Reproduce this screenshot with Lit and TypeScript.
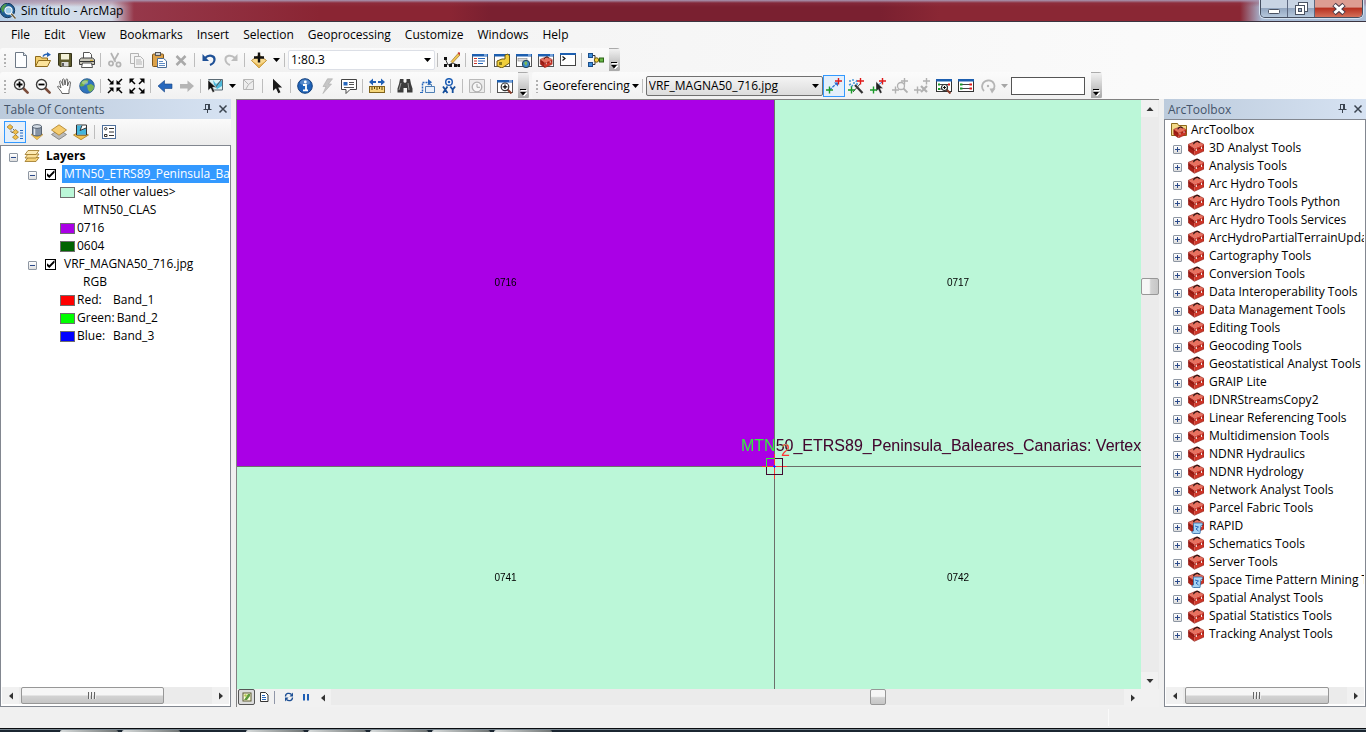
import { LitElement, html, svg, css, nothing } from "lit";
import { customElement, property } from "lit/decorators.js";
import { classMap } from "lit/directives/class-map.js";

const cross = (x: number, y: number, c: string) =>
  svg`<path d=${`M${x - 3} ${y}h7M${x + 0.5} ${y - 3.5}v7`} stroke=${c} stroke-width="1.4" fill="none"/>`;

const windowFrame = svg`<rect x=".5" y="2.5" width="15" height="12" fill="#fff" stroke="#555"/><path d="M0 2h16v2.5H0z" fill="#1d5fb0"/><path d="M12 3h3" stroke="#cfe4ff"/>`;
const lens = (c: string, ring: string) => svg`
  <path d="M10 10l4.6 4.6" stroke=${c} stroke-width="2.6" stroke-linecap="round"/>
  <circle cx="6.5" cy="6.5" r="5" fill="#fff" stroke=${ring} stroke-width="1.4"/>`;
const toolbox = svg`
  <path d="M.3 4.300L9 .8l7 3.700-9.700 3.700z" fill="#e8715f"/>
  <path d="M.3 4.300l6 3.900V15.300l-6-4.500z" fill="#a81f17"/>
  <path d="M6.300 8.200L16 4.500v6.500l-9.700 4.300z" fill="#cf3628"/>
  <path d="M.3 6.600l6 3.900L16 6.700" stroke="#7c150e" stroke-width=".8" fill="none"/>
  <path d="M.3 4.300L9 .8l7 3.700v6.500l-9.700 4.300-6-4.500z" stroke="#8b1d14" stroke-width=".6" fill="none"/>
  <path d="M5.500 4.300c.3-2.600 5.200-4.300 6-1.300" stroke="#2a1512" stroke-width="1.300" fill="none"/>
  <path d="M8.300 8.700v2.200M13.500 6.700v2.200" stroke="#f6ebe6" stroke-width="1.100"/>`;
const layerStack = svg`
  <path d="M4 9.500h11l-3 4H1z" fill="#f6d27a" stroke="#9b7422" stroke-width=".8"/>
  <path d="M4 6h11l-3 4H1z" fill="#fbe09a" stroke="#9b7422" stroke-width=".8"/>
  <path d="M4 2.500h11l-3 4H1z" fill="#fdeab4" stroke="#9b7422" stroke-width=".8"/>`;
const globe = svg`
  <circle cx="8" cy="8" r="7.300" fill="#2f74bd" stroke="#20508a" stroke-width=".8"/>
  <path d="M3 3.500c2-2 5-2.200 6.500-1.500l-1 2.500-2.500 1-1 2.500-3 .500-1-.5c0-2 1-3.500 2-4.500z" fill="#6fae4a"/>
  <path d="M8 7.500l4-1.500 3 2c0 3-2 5.500-4 6l-2-2z" fill="#7db552"/>
  <ellipse cx="6" cy="4.500" rx="3" ry="2" fill="#fff" opacity=".35"/>`;

const ICONS: Record<string, unknown> = {
  app: svg`
    <circle cx="7.500" cy="7.500" r="7.200" fill="#1f5d95" stroke="#17375a"/>
    <path d="M1 6c1-4 4-5 6-5L4.500 5 3 10z" fill="#4f9a4a"/>
    <path d="M10.500 10l5 5.500" stroke="#e8eef4" stroke-width="2.800"/>
    <path d="M11 10.500l4.500 5" stroke="#6b5a36" stroke-width="1.400"/>
    <circle cx="8.500" cy="7.500" r="3.600" fill="#9ccbea" stroke="#f2f7fc" stroke-width="1.200"/>`,
  new: svg`<path d="M2.500 .5h8l3 3v12h-11z" fill="#fdfeff" stroke="#6d7885"/><path d="M10.500.5v3h3" fill="#dbe4ee" stroke="#6d7885"/>`,
  open: svg`
    <path d="M.5 14.500V4.500h5l1 1.500h6v3" fill="#f3cf6f" stroke="#8d6a1c"/>
    <path d="M.5 14.500l3-6h12l-3 6z" fill="#fbe39b" stroke="#8d6a1c"/>
    <path d="M8 4.500c1-2.500 3-2.500 5-2" stroke="#2563b5" stroke-width="1.500" fill="none"/><path d="M12 0l4 2.800L12 5z" fill="#2563b5"/>`,
  save: svg`
    <path d="M1.500 1.500h13v13h-11.500l-1.500-1.500z" fill="#5d5a2c" stroke="#35331a"/>
    <rect x="4" y="2" width="8" height="5.500" fill="#f3f1d8"/><rect x="4.500" y="10" width="7" height="4.500" fill="#dcdcdc"/><path d="M6 11v3" stroke="#333" stroke-width="1.500"/>`,
  print: svg`
    <path d="M4.500 7V.5h6l2 2V7" fill="#fff" stroke="#555"/>
    <path d="M.5 7.500l2-1.500h11l2 1.500v5H.5z" fill="#c9c7bb" stroke="#3f3f3f"/>
    <path d="M1 9.500h14" stroke="#333"/><path d="M3.500 11h9l1 4.500h-11z" fill="#fff" stroke="#555"/><path d="M11 8.300h3" stroke="#d8b02c"/>`,
  cut: svg`<g fill="none" stroke="#b3b3b3" stroke-width="1.700"><path d="M4 1l4.500 9M11.500 1L7 9"/><circle cx="4" cy="11.500" r="2.100"/><circle cx="11.500" cy="12.500" r="2.100"/></g>`,
  copy: svg`<g fill="#f4f4f4" stroke="#b3b3b3"><path d="M1.500 1.500h8v10h-8z"/><path d="M5.500 4.500h6l3 3v8h-9z"/><path d="M7 8h5M7 10h6M7 12h6"/></g>`,
  paste: svg`
    <rect x="1.500" y="2" width="11" height="12.500" rx="1" fill="#dca24a" stroke="#7d551a"/>
    <rect x="4.500" y=".5" width="5" height="3" fill="#cfcfcf" stroke="#555"/>
    <path d="M6.500 6.500h6l3 2.500v6.500h-9z" fill="#fff" stroke="#4c6c96"/><path d="M8 9.500h4M8 11.500h6M8 13.500h6" stroke="#5f8cc4"/>`,
  delete: svg`<path d="M3.500 4l9 9M12.500 4l-9 9" stroke="#a9a9a9" stroke-width="2.500"/>`,
  undo: svg`<path d="M4 6c4-4 10-2.500 9.500 2-.3 2.500-2 4-4.500 5" fill="none" stroke="#1f5197" stroke-width="2.200"/><path d="M1.500 2v7h6.500z" fill="#1f5197"/>`,
  redo: svg`<path d="M12 6c-4-4-10-2.500-9.500 2 .3 2.500 2 4 4.500 5" fill="none" stroke="#bdbdbd" stroke-width="2"/><path d="M14.500 2v7H8z" fill="#bdbdbd"/>`,
  add: svg`<path d="M.5 8.500L8 3l7.500 5.500L8 16z" fill="#f9d98c" stroke="#b48a3a"/><path d="M.5 8.500L8 13l7.500-4.500L8 16z" fill="#e3b454"/><path d="M8 .5v10M3 5.500h10" stroke="#111" stroke-width="2.400"/>`,
  editor: svg`
    <path d="M1 6l3 7 5-2 6 3" fill="none" stroke="#333"/><g fill="#111"><path d="M0 5h3v3H0zM0 12h3v3H0zM5 12h3v3H5zM10 12h3v3h-3zM13.500 12h2.500v3h-2.500z"/></g>
    <path d="M7 9.500L14 1.500l2 1.500-7.500 8z" fill="#f1c552" stroke="#8d6a1c" stroke-width=".6"/><path d="M13.500 1l1.500-1 1.500 1.500L15.500 3z" fill="#c9352a"/>`,
  tocwin: svg`${windowFrame}<path d="M2 6.500h3M2 9h3M2 11.500h3" stroke="#c9352a"/><path d="M6 6.500h7M6 9h7M6 11.500h5" stroke="#2563b5"/>`,
  catalog: svg`${windowFrame}<path d="M3 9l5-2h3V3l3-1 1.500 2v7L8 16l-5-2z" fill="#f0cf3c" stroke="#6e5a0e"/><path d="M5 10h3v3H5z" fill="#8a7a1a"/>`,
  search: svg`${windowFrame}<rect x="2" y="6.500" width="9" height="2.500" fill="#ddd" stroke="#888" stroke-width=".6"/><circle cx="10" cy="12" r="3.700" fill="#3b86c9" stroke="#245"/><path d="M8 11l2-2 1.500 2-1.500 3z" fill="#7dbb55"/>`,
  toolboxwin: svg`${windowFrame}<g transform="translate(2 4) scale(.76)">${toolbox}</g>`,
  python: svg`<rect x=".5" y="1.500" width="15" height="12" fill="#fff" stroke="#444"/><path d="M0 1h16v2H0z" fill="#1d5fb0"/><path d="M2.500 4.500l2.500 2-2.500 2" fill="none" stroke="#111" stroke-width="1.200"/>`,
  model: svg`
    <path d="M4 3.500h3v9H4M7 8h3" fill="none" stroke="#333"/>
    <rect x=".5" y="1.500" width="4" height="4" fill="#3f8fdb" stroke="#1c4d88"/><rect x=".5" y="10.500" width="4" height="4" fill="#3f8fdb" stroke="#1c4d88"/>
    <circle cx="8.500" cy="8" r="2.200" fill="#f0cf3c" stroke="#6e5a0e"/><rect x="11.500" y="6" width="4" height="4" fill="#66b545" stroke="#2d6417"/>`,
  zoomin: svg`${lens("#7a4b3a", "#3c3c3c")}<path d="M6.500 3.500v6M3.500 6.500h6" stroke="#000" stroke-width="1.800"/>`,
  zoomout: svg`${lens("#7a4b3a", "#3c3c3c")}<path d="M3.500 6.500h6" stroke="#000" stroke-width="1.800"/>`,
  pan: svg`<path d="M5 15.500c0-2-4-5-4.500-7 1-1 2.500.5 3.500 1.500L2.500 3.500c.8-1 1.500-.5 2 .5L6 7.500 5.500 1.500c.8-1 1.600-.7 1.800.3L8 7l1-5.500c.8-.8 1.700-.5 1.700.5L10.500 8 12 4c.8-.8 1.700-.3 1.500.7-.5 3-.5 5.300-1.500 7.300v3.500z" fill="#fff" stroke="#555" stroke-width=".9"/>`,
  globe,
  fixedin: svg`<g stroke="#000" stroke-width="1.500"><path d="M1 1l4 4M15 1l-4 4M1 15l4-4M15 15l-4-4"/></g><path d="M6.500 2v4.500H2zM9.500 2v4.500H14zM6.500 14V9.500H2zM9.500 14V9.500H14z"/>`,
  fixedout: svg`<g stroke="#000" stroke-width="1.500"><path d="M2 2l4 4M14 2l-4 4M2 14l4-4M14 14l-4-4"/></g><path d="M.5 5.500v-5h5zM15.500 5.500v-5h-5zM.5 10.500v5h5zM15.500 10.500v5h-5z"/>`,
  back: svg`<path d="M1 8l6.500-5.500V6H15v4.500H7.500V14z" fill="#2768bd" stroke="#164383" stroke-width=".6"/>`,
  forward: svg`<path d="M15 8L8.500 2.500V6H1v4.500h7.500V14z" fill="#b5b5b5"/>`,
  select: svg`<path d="M1.500 1.500h14v10.500h-9z" fill="#d9f2f5" stroke="#5b6a74"/><path d="M6 2l3 4 6-4v6l-5 3-3-4z" fill="#4db8da"/><path d="M8 10l6-8" stroke="#555"/><path d="M1 2v10.500l2.700-2.300 2 4.300 2-1-2-4.200h3.300z" fill="#111" stroke="#fff" stroke-width=".5"/>`,
  clear: svg`<path d="M2.500 1.500h10v10h-10z" fill="#ededed" stroke="#b5b5b5"/><path d="M3 2l4.500 4.500L12 3M7.500 6.500L5 11" stroke="#b5b5b5" fill="none"/>`,
  pointer: svg`<path d="M4 .8v12l3-2.500 2.300 5 2.200-1.100-2.300-4.700h3.900z" fill="#1a1a1a"/>`,
  identify: svg`<circle cx="8" cy="8" r="7.300" fill="#1e63b8" stroke="#123f7c"/><ellipse cx="8" cy="4.500" rx="5" ry="3" fill="#fff" opacity=".25"/><circle cx="8.300" cy="4" r="1.400" fill="#fff"/><path d="M6 7h3v5M6 12.300h5" stroke="#fff" stroke-width="1.800" fill="none"/>`,
  hyperlink: svg`<path d="M8.500 .8h5L9.500 6h3L4 15.500 7 8.500H4z" fill="#c6c6c6" stroke="#ababab" stroke-width=".6"/>`,
  popup: svg`<path d="M.5 1.500h15v10H9l-4 4v-4H.5z" fill="#fff" stroke="#444"/><rect x="2.500" y="4" width="4" height="3.500" fill="#2768bd"/><path d="M8 4.500h5M8 6.500h5M3 9.500h10" stroke="#555"/>`,
  measure: svg`<path d="M0 4l4-3.500v2.500h3v2H4v2.500zM16 4l-4-3.500v2.500H9v2h3v2.500z" fill="#1f5fb5"/><rect x=".5" y="8.500" width="15" height="6" fill="#f5d67a" stroke="#80621c"/><path d="M3 9v3M5.500 9v2M8 9v3M10.500 9v2M13 9v3" stroke="#5d450d"/>`,
  find: svg`<path d="M3 1h3.500v3L8 5l1.500-1V1H13l1 5 1.500 4.500v4h-5.500V10H6.500v4.500H.5v-4L2 6z" fill="#3d3d3d"/><path d="M4 5l-2 7M11 5l1 7" stroke="#9a9a9a"/>`,
  route: svg`<path d="M3.500 13.500v-9h6" fill="none" stroke="#2768bd" stroke-width="1.500" stroke-dasharray="2 1"/><path d="M9 1l4 3.300L9 7.500z" fill="#2768bd"/><path d="M6.500 8.500h9v6h-9zM8.500 6.500h4v2" fill="#e8f1fa" stroke="#4f7fb4"/><path d="M1 14.500h3" stroke="#2768bd"/>`,
  xy: svg`<circle cx="8" cy="4" r="3.300" fill="#fff" stroke="#1f5fb5" stroke-width="1.500"/><circle cx="8" cy="4" r="1.300" fill="#1f5fb5"/><path d="M2 8.500l4.500 6.500M6.500 8.500L2 15M9.300 8.500l2.400 3 2.400-3M11.700 11.500V15" stroke="#164f9c" stroke-width="1.800" fill="none"/>`,
  time: svg`<path d="M.5 1.500h15v13H.5z" fill="#ececec" stroke="#b9b9b9"/><circle cx="8" cy="9" r="4.800" fill="#f7f7f7" stroke="#b0b0b0" stroke-width="1.300"/><path d="M8 6v3.300h3" stroke="#a5a5a5" fill="none"/>`,
  viewer: svg`${windowFrame}<path d="M10 11l4.500 4.500" stroke="#8a3b2a" stroke-width="2"/><circle cx="8" cy="8.800" r="3.800" fill="#fff" stroke="#333" stroke-width="1.200"/><path d="M8 6.500v4.600M5.700 8.800h4.600" stroke="#000" stroke-width="1.200"/>`,
  ctrl: svg`<path d="M3.500 12L11 5" stroke="#2a6fd0" stroke-width="1.200" stroke-dasharray="3 1"/><path d="M8 4.500h4v4z" fill="#2a6fd0"/>${cross(3, 12, "#1a9a2a")}${cross(12, 3, "#e01818")}`,
  wand: svg`<path d="M7 7l7.500 8" stroke="#333" stroke-width="2.200"/><path d="M1 3h2M5 1v2M9 2l-1 2M1 7l2-1M3 9l2-2M8 6h2M5 5h2" stroke="#4a97d8" stroke-width="1.400"/><path d="M5 14l7-8" stroke="#4b4b4b"/>${cross(3, 12, "#1a9a2a")}${cross(12, 3, "#e01818")}`,
  ctrlsel: svg`<path d="M6 9l6-5" stroke="#2a6fd0"/><path d="M6 3.500v10l2.300-2 1.800 4 2-1-1.900-3.900h3z" fill="#222" stroke="#fff" stroke-width=".4"/>${cross(3, 12, "#1a9a2a")}${cross(12, 3, "#e01818")}`,
  ctrlzoom: svg`<circle cx="9" cy="8" r="3.500" fill="#f4f4f4" stroke="#b0b0b0" stroke-width="1.300"/><path d="M11.500 10.500l4 4" stroke="#b0b0b0" stroke-width="1.800"/>${cross(3, 12, "#b0b0b0")}${cross(12, 3, "#b0b0b0")}`,
  ctrldel: svg`<path d="M7 8l6 6M13 8l-6 6" stroke="#b0b0b0" stroke-width="2.200"/>${cross(3, 12, "#b0b0b0")}${cross(12, 3, "#b0b0b0")}`,
  geoview: svg`<rect x=".5" y="1.500" width="15" height="12" fill="#fff" stroke="#333"/><path d="M0 1h16v2.500H0z" fill="#1d5fb0"/><path d="M2 6.500h11M2 11h4" stroke="#444"/><path d="M2 5.500h2v2H2zM2 10h2v2H2z" fill="#1a9a2a"/><path d="M12 5.500h2v2h-2z" fill="#e01818"/><path d="M10.500 11.500l4 4" stroke="#8a3b2a" stroke-width="2"/><circle cx="8.500" cy="9.500" r="3" fill="#fff" stroke="#333" stroke-width="1.200"/><path d="M7 9.500h3M8.500 8v3" stroke="#111"/>`,
  linktable: svg`<rect x=".5" y="1.500" width="15" height="12" fill="#fff" stroke="#333"/><path d="M0 1h16v2.500H0z" fill="#1d5fb0"/><path d="M3 6.500h9M3 10.500h9" stroke="#444"/><path d="M2 5.500h2.500v2H2zM2 9.500h2.500v2H2z" fill="#1a9a2a"/><path d="M11.500 5.500H14v2h-2.500zM11.500 9.500H14v2h-2.500z" fill="#e01818"/>`,
  rotate: svg`<path d="M4 13C.5 9.500 2 3 8 2.500s8 6 5 9" fill="none" stroke="#b5b5b5" stroke-width="1.800"/><path d="M9.500 10.500h6l-3.500 5z" fill="#b5b5b5"/><circle cx="8" cy="8" r="1.200" fill="#b5b5b5"/>`,
  toolbox,
  scripttoolbox: svg`${toolbox}<path d="M5.500 5h7.500c2.500 0 2 2.500 0 2.500L12 15.500H5.500c-2 0-2-2.500 0-2.500z" fill="#a6d4f5" stroke="#2d6ba6" stroke-width=".8"/><path d="M7 8l3.500 1-2.500 2 2.500 2" stroke="#2768bd" fill="none"/>`,
  rootbox: svg`<path d="M.5 13.500V1.500h6l1 2h8v10z" fill="#f3d987" stroke="#8d6a1c"/><g transform="translate(2.500 4) scale(.78)">${toolbox}</g>`,
  layers: layerStack,
  order: svg`<path d="M4 4v4.500h7M9 8.500v4M4 3l5 5" stroke="#555" fill="none" stroke-dasharray="1.500 1"/><path d="M0 3l3-2.500L6 3 3 5.500z" fill="#f2c14d" stroke="#9b7422" stroke-width=".7"/><path d="M5.500 8l3-2.500 3 2.500-3 2.500zM5.500 13.200l3-2.500 3 2.500-3 2.500z" fill="#f2c14d" stroke="#9b7422" stroke-width=".7"/><path d="M13 6.500h3M13 9h3M13 12h3M13 14.500h3" stroke="#2768bd" stroke-width="1.200"/>`,
  source: svg`<path d="M2 10.500l6-2 6 2-6 5.300z" fill="#f2c14d" stroke="#b48a3a" stroke-width=".6"/><path d="M3.500 2.500v8c1.500 2 7.500 2 9 0v-8z" fill="#8593a5" stroke="#3f4b5a" stroke-width=".8"/><path d="M5.500 3v8" stroke="#dfe6ee" stroke-width="1.500"/><ellipse cx="8" cy="2.500" rx="4.500" ry="1.900" fill="#d5dde6" stroke="#3f4b5a" stroke-width=".8"/>`,
  visibility: svg`<path d="M.5 10.500L8 5.500l7.500 5L8 15.500z" fill="#b9b9b9" stroke="#777" stroke-width=".8"/><path d="M.5 6L8 .8 15.500 6 8 11.200z" fill="#f6cd70" stroke="#a97c25" stroke-width=".8"/>`,
  selection: svg`<path d="M.5 11L8 7l7.500 4L8 15.700z" fill="#f2c14d" stroke="#a97c25" stroke-width=".8"/><path d="M3.500 1h10v10h-10z" fill="#fff" stroke="#333"/><path d="M4 1.500h5l-2 5 6-2.500v6.500H4z" fill="#43b5dc"/><path d="M9 1.500l-2 5 6-2.500" stroke="#333" fill="none"/>`,
  options: svg`<rect x="1.500" y="1.500" width="13" height="13" fill="#fff" stroke="#4f6f9a"/><path d="M8 4.500h5M8 8h5M8 11.500h5" stroke="#333"/><g fill="none" stroke="#333"><circle cx="4.700" cy="4.700" r="1.200"/><path d="M3.500 10.500h2.500v2H3.500z"/></g>`,
  dataview: svg`<rect x="4" y="4" width="8" height="8" fill="#fdfce0" stroke="#5a5a30"/><path d="M5 11l4-6h2v2l-3 4z" fill="#5d9a3d"/><circle cx="6.500" cy="6.500" r="1.300" fill="#b3c94c"/>`,
  layoutview: svg`<path d="M4.500 3.500h5l2.500 2.500v6.500h-7.500z" fill="#fff" stroke="#333"/><path d="M6 6.500h3M6 8.500h4M6 10.500h4" stroke="#2768bd"/>`,
  refresh: svg`<path d="M4.500 7.500c0-3.500 4-4 6-2M11.500 8.500c0 3.500-4 4-6 2" fill="none" stroke="#1d4f94" stroke-width="1.300"/><path d="M12 3.500v4H8.500zM4 12.500V8.500h3.500z" fill="#1d4f94"/>`,
  pause: svg`<path d="M5 5h2v6.500H5zM9 5h2v6.500H9z" fill="#1f5fb5"/>`,
  pin: svg`<path d="M6 3.500h5M6.500 3v5.500M10.500 3v5.500M9.500 3v5.500M4.500 8.500h8M8.500 8.500V12" stroke="#3b4450" fill="none"/>`,
  close: svg`<path d="M4.500 4.500l7 7M11.500 4.500l-7 7" stroke="#3b4450" stroke-width="1.500"/>`,
  left: svg`<path d="M10 4.500v7L6 8z" fill="#333"/>`,
  right: svg`<path d="M6 4.500v7L10 8z" fill="#333"/>`,
  up: svg`<path d="M4.500 10h7L8 6z" fill="#333"/>`,
  down: svg`<path d="M4.500 6h7L8 10z" fill="#333"/>`,
};

const icon = (name: string) => html`<svg class="ico" viewBox="0 0 16 16" aria-hidden="true">${ICONS[name]}</svg>`;

const base = css`
  :host { box-sizing: border-box; }
  *, *::before, *::after { box-sizing: border-box; }
  button, select, input { font: inherit; color: inherit; margin: 0; }
  button { border: 1px solid transparent; background: none; padding: 0; display: flex; align-items: center; justify-content: center; }
  .ico { width: 16px; height: 16px; display: block; flex: none; }
`;

@customElement("map-toolbar")
class MapToolbar extends LitElement {
  static styles = [base, css`
    :host { display: flex; align-items: center; align-self: stretch; background: linear-gradient(#fbfbfb, #f1f1f1); border-radius: 3px; }
    .grip { width: 10px; height: 14px; flex: none; background: radial-gradient(circle at 4px 2px, #b0b0b0 1px, transparent 1px) 1px 0 / 10px 4px; }
    .overflow { align-self: stretch; width: 11px; margin-left: 2px; border-radius: 0 3px 3px 0; background: linear-gradient(#f1f1f1, #a9a9a9); align-items: flex-end; }
    .overflow svg { width: 9px; height: 9px; margin-bottom: 1px; }
  `];
  render() {
    return html`<span class="grip"></span><slot></slot>
      <button class="overflow" aria-label="Toolbar options"><svg viewBox="0 0 9 9"><path d="M2 2.500h6M2 5h6L5 8z" stroke="#fff" fill="#fff"/><path d="M1 1.500h6" stroke="#000"/><path d="M1 4h6L4 7.500z"/></svg></button>`;
  }
}

@customElement("scroll-bar")
class ScrollBar extends LitElement {
  @property() axis = "x";
  @property({ type: Number }) start = 0;
  @property({ type: Number }) size = 10;
  @property({ type: Boolean }) ridged = false;
  static styles = [base, css`
    :host { display: block; }
    .bar { display: flex; height: 100%; background: #ebebeb; }
    .bar.y { flex-direction: column; }
    .arrow { width: 17px; height: 17px; flex: none; background: #f1f1f1; }
    .track { flex: 1; display: flex; min-width: 0; min-height: 0; }
    .y .track { flex-direction: column; }
    .thumb { flex: none; display: flex; align-items: center; justify-content: center; gap: 1px; border: 1px solid #979797; border-radius: 2px; background: linear-gradient(#f6f6f6 45%, #d2d2d2 55%, #c6c6c6); }
    .y .thumb { background: linear-gradient(90deg, #f6f6f6 45%, #d2d2d2 55%, #c6c6c6); }
    .ridge { width: 2px; height: 7px; background: #666; border-right: 1px solid #eee; }
  `];
  render() {
    const y = this.axis === "y";
    const dim = y ? "height" : "width";
    return html`<div class=${classMap({ bar: true, y })}>
      <button class="arrow" aria-label="Scroll back">${icon(y ? "up" : "left")}</button>
      <div class="track"><span style=${`${dim}:${this.start}%`}></span>
        <div class="thumb" style=${`${dim}:${this.size}%`}>${this.ridged ? [0, 1, 2].map(() => html`<i class="ridge"></i>`) : nothing}</div></div>
      <button class="arrow" aria-label="Scroll forward">${icon(y ? "down" : "right")}</button>
    </div>`;
  }
}

const MENUS = ["File", "Edit", "View", "Bookmarks", "Insert", "Selection", "Geoprocessing", "Customize", "Windows", "Help"];
const TOOLBOXES = ["3D Analyst Tools", "Analysis Tools", "Arc Hydro Tools", "Arc Hydro Tools Python", "Arc Hydro Tools Services", "ArcHydroPartialTerrainUpdate", "Cartography Tools", "Conversion Tools", "Data Interoperability Tools", "Data Management Tools", "Editing Tools", "Geocoding Tools", "Geostatistical Analyst Tools", "GRAIP Lite", "IDNRStreamsCopy2", "Linear Referencing Tools", "Multidimension Tools", "NDNR Hydraulics", "NDNR Hydrology", "Network Analyst Tools", "Parcel Fabric Tools", "RAPID", "Schematics Tools", "Server Tools", "Space Time Pattern Mining Tools", "Spatial Analyst Tools", "Spatial Statistics Tools", "Tracking Analyst Tools"];
const SCRIPTED = new Set(["RAPID", "Space Time Pattern Mining Tools"]);

@customElement("app-root")
class AppRoot extends LitElement {
  static styles = [base, css`
    :host { display: flex; flex-direction: column; height: 100vh; padding-right: 2px; background: #fff; color: #000; font: 12px/18px "Open Sans", "Noto Sans", sans-serif; overflow: hidden; }
    .titlebar { display: flex; align-items: center; height: 22px; flex: none; padding: 0 3px 0 0; border-bottom: 1px solid #3b3440;
      background: linear-gradient(#a897b2, rgba(150, 60, 80, .3) 3px, transparent 7px), linear-gradient(90deg, #b4cce6, #d3dfec 60px, #cfd6e4 112px, #96384a 134px, #8a2533 320px, #8a2533 450px, #7a2030 490px, #7a2030 880px, #8a2734 940px, #8a2734 1240px, #a9bcd6 1262px); }
    .title { flex: 1; margin-left: 5px; }
    .caption { align-self: flex-start; display: flex; height: 18px; border: 1px solid #454e60; border-top: 0; border-radius: 0 0 5px 5px; overflow: hidden; box-shadow: 0 0 0 1px #d5e2f0; }
    .caption button { width: 27px; border: 0; border-right: 1px solid #5c6880; background: linear-gradient(#c8d4e4 45%, #93a6c0 50%, #b5c7dc); }
    .caption .quit { width: 47px; border: 0; background: linear-gradient(#dd9d92 40%, #b83322 50%, #d4705a); }
    .chrome { flex: none; background: linear-gradient(90deg, #f0f0f0, #fcfcfc); }
    .menubar { display: flex; height: 26px; align-items: center; padding-left: 4px; }
    .menubar button { padding: 0 6px; }
    .row { display: flex; height: 24px; gap: 3px; }
    .row.second { height: 27px; }
    .tool { width: 22px; height: 22px; flex: none; }
    .tool.on { border-color: #3399ff; background: #e3effb; }
    .tool.drop { width: 12px; }
    .sep { width: 6px; height: 14px; flex: none; background: linear-gradient(#bdbdbd, #bdbdbd) 2px 0 / 1px 100% no-repeat; }
    .caret { width: 7px; height: 4px; display: block; }
    .combo { position: relative; display: block; height: 20px; }
    .combo select { appearance: none; display: block; width: 100%; height: 100%; padding: 0 20px 0 2px; border: 1px solid #dcdfe6; border-radius: 2px; background: #fff; }
    .combo .caret { position: absolute; right: 4px; top: 8px; pointer-events: none; }
    .scale { width: 147px; }
    .raster { width: 177px; }
    .raster select { border-color: #707070; background: linear-gradient(#f4f4f4, #dcdcdc); }
    .geo { gap: 2px; height: 22px; }
    .field { width: 74px; height: 18px; margin: 0 4px 0 0; border: 1px solid #555; background: #fff; padding: 0 2px; }
    .main { flex: 1; min-height: 0; display: grid; grid-template-columns: 231px minmax(0, 1fr) 202px; gap: 5px; background: #f0f0f0; }
    .panel { display: flex; flex-direction: column; min-width: 0; min-height: 0; }
    .head { display: flex; align-items: center; height: 20px; flex: none; padding: 1px 0 0 4px; background: linear-gradient(90deg, #bccbdc, #d6e2f2); color: #44546a; }
    .head h2 { flex: 1; margin: 0; font: inherit; }
    .head button { width: 16px; height: 18px; padding-bottom: 2px; }
    .tabs { display: flex; align-items: center; height: 26px; flex: none; padding-left: 4px; background: linear-gradient(#fafafa, #ececec); }
    .box { flex: 1; min-height: 0; display: flex; flex-direction: column; border: 1px solid #828790; background: #fff; padding: 1px 1px 2px; }
    .tree { flex: 1; margin: 0; padding: 0; list-style: none; overflow: hidden; white-space: nowrap; }
    .tree li { display: flex; align-items: center; height: 18px; }
    .exp { width: 9px; height: 9px; flex: none; border: 1px solid #8e97a3; border-radius: 1px; background: linear-gradient(#fff, #dedede); margin-top: 2px; }
    .exp svg { width: 7px; height: 7px; display: block; }
    .i0 { padding-left: 7px; gap: 6px; } .i1 { padding-left: 26px; }
    .i2 { padding-left: 58px; gap: 2px; } .i3 { padding-left: 81px; }
    .i1 .exp { margin-right: 8px; }
    .strong { font-weight: 700; }
    .tick { appearance: none; width: 11px; height: 11px; flex: none; border: 1px solid #000; background: #fff; margin: 0 6px 0 0; display: grid; place-items: center; }
    .tick:checked::before { content: ""; width: 8px; height: 8px; background: #000; clip-path: polygon(0 35%, 35% 65%, 100% 0, 100% 35%, 35% 100%, 0 70%); }
    .name { padding: 0 2px; }
    .picked { flex: 1; background: #3399ff; color: #fff; }
    .swatch { width: 15px; height: 11px; flex: none; border: 1px solid #6e6e6e; }
    .s-mint { background: #bbf7d8; } .s-purple { background: #aa00e6; } .s-forest { background: #006400; }
    .s-red { background: #f00; } .s-green { background: #0f0; } .s-blue { background: #00f; }
    .band { min-width: 34px; }
    .hbar { height: 17px; flex: none; }
    .toolboxes li { padding-left: 7px; gap: 5px; }
    .toolboxes .exp { margin-right: 1px; }
    .toolboxes .root { padding-left: 5px; gap: 4px; }
    .mapframe { display: grid; grid-template: minmax(0, 1fr) 18px / minmax(0, 1fr) 18px; border: solid #828282; border-width: 1px 0 0 1px; background: #f1f1f1; min-height: 0; }
    .map { display: grid; grid-template: 366fr 223fr / 537fr 367fr; background: #bbf7d8; overflow: hidden; font: 10px/12px "Liberation Sans", Arial, sans-serif; isolation: isolate; }
    .sheet { display: grid; place-items: center; position: relative; border: solid #6b6f6b; border-width: 0; min-width: 0; }
    .sheet.purple { background: #aa00e6; }
    .sheet.east { border-left-width: 1px; } .sheet.south { border-top-width: 1px; }
    .snap { position: absolute; left: -34px; top: -31px; font-size: 16px; line-height: 20px; white-space: nowrap; color: #78f0aa; mix-blend-mode: difference; }
    .linkno { position: absolute; left: 6px; top: -26px; font-size: 16px; line-height: 20px; color: #f33; }
    .marker { position: absolute; left: -14px; top: -14px; width: 28px; height: 28px; fill: none; shape-rendering: crispEdges; }
    .mapbar { display: flex; align-items: flex-start; background: #f1f1f1; padding-left: 1px; }
    .mapbar button { width: 17px; height: 16px; }
    .mapbar .on { border-color: #555; border-radius: 2px; background: #dcdcdc; }
    .mapbar .rule { width: 1px; height: 13px; background: #9096a8; margin: 2px 5px 0 2px; }
    .mapbar scroll-bar { flex: 1; height: 16px; }
    .status { height: 21px; flex: none; background: #f0f0f0; display: flex; justify-content: flex-end; }
    .status span { border-left: 1px solid #fafafa; margin: 2px 0; flex: none; width: 258px; }
    .taskbar { height: 4px; flex: none; display: flex; gap: 4px; padding-left: 60px; background: #1b2631; border-top: 1px solid #0a0d10; box-shadow: inset 0 1px #77858f; }
    .taskbar span { width: 58px; margin-top: 1px; background: linear-gradient(90deg, #d8dcdc, #6f7474); border-radius: 2px 2px 0 0; }
    .taskbar .later { margin-left: 62px; }
  `];

  private tool(name: string, label: string, on = false) {
    return html`<button class=${classMap({ tool: true, on })} aria-label=${label} title=${label}>${icon(name)}</button>`;
  }
  private caret(c = "#000") {
    return html`<svg class="caret" viewBox="0 0 7 4" aria-hidden="true"><path d="M0 0h7L3.500 4z" fill=${c}/></svg>`;
  }
  private drop(label: string, c = "#000") {
    return html`<button class="tool drop" aria-label=${label}>${this.caret(c)}</button>`;
  }
  private exp(open: boolean) {
    return html`<button class="exp" aria-label=${open ? "Collapse" : "Expand"}><svg viewBox="0 0 7 7"><path d=${open ? "M1 3.5h5" : "M1 3.5h5M3.5 1v5"} stroke="#2b4a8b" fill="none"/></svg></button>`;
  }
  private head(text: string) {
    return html`<div class="head"><h2>${text}</h2><button aria-label="Auto hide">${icon("pin")}</button><button aria-label="Close">${icon("close")}</button></div>`;
  }

  render() {
    const sep = html`<span class="sep"></span>`;
    return html`
      <header class="titlebar">${icon("app")}<span class="title">Sin título - ArcMap</span>
        <div class="caption">
          <button aria-label="Minimize"><svg class="ico" viewBox="0 0 16 16"><rect x="2.500" y="8.500" width="11" height="4" rx="1" fill="#fff" stroke="#4a5262"/></svg></button>
          <button aria-label="Restore"><svg class="ico" viewBox="0 0 16 16"><g fill="#fff" stroke="#4a5262"><rect x="5.500" y="1.500" width="9" height="9"/><rect x="2.500" y="4.500" width="9" height="9"/><rect x="5.500" y="7.500" width="3" height="3" fill="#9fb0c8"/></g></svg></button>
          <button class="quit" aria-label="Close"><svg class="ico" viewBox="0 0 16 16"><path d="M3 3.500l10 9M13 3.500l-10 9" stroke="#4a3a48" stroke-width="5"/><path d="M3.500 4l9 8M12.500 4l-9 8" stroke="#fff" stroke-width="3"/></svg></button>
        </div>
      </header>
      <div class="chrome">
        <nav class="menubar">${MENUS.map((m) => html`<button>${m}</button>`)}</nav>
        <div class="row">
          <map-toolbar>
            ${this.tool("new", "New")}${this.tool("open", "Open")}${this.tool("save", "Save")}${this.tool("print", "Print")}${sep}
            ${this.tool("cut", "Cut")}${this.tool("copy", "Copy")}${this.tool("paste", "Paste")}${this.tool("delete", "Delete")}${sep}
            ${this.tool("undo", "Undo")}${this.tool("redo", "Redo")}${sep}
            ${this.tool("add", "Add Data")}${this.drop("Add Data options")}${sep}
            <span class="combo scale"><select aria-label="Map scale"><option>1:80.3</option></select>${this.caret()}</span>${sep}
            ${this.tool("editor", "Editor Toolbar")}${sep}
            ${this.tool("tocwin", "Table Of Contents")}${this.tool("catalog", "Catalog")}${this.tool("search", "Search")}${this.tool("toolboxwin", "ArcToolbox")}${this.tool("python", "Python")}${sep}
            ${this.tool("model", "ModelBuilder")}
          </map-toolbar>
        </div>
        <div class="row second">
          <map-toolbar>
            ${this.tool("zoomin", "Zoom In")}${this.tool("zoomout", "Zoom Out")}${this.tool("pan", "Pan")}${this.tool("globe", "Full Extent")}${sep}
            ${this.tool("fixedin", "Fixed Zoom In")}${this.tool("fixedout", "Fixed Zoom Out")}${sep}
            ${this.tool("back", "Back")}${this.tool("forward", "Forward")}${sep}
            ${this.tool("select", "Select Features")}${this.drop("Select options")}${this.tool("clear", "Clear Selection")}${sep}
            ${this.tool("pointer", "Select Elements")}${sep}
            ${this.tool("identify", "Identify")}${this.tool("hyperlink", "Hyperlink")}${this.tool("popup", "HTML Popup")}${sep}
            ${this.tool("measure", "Measure")}${sep}
            ${this.tool("find", "Find")}${this.tool("route", "Find Route")}${this.tool("xy", "Go To XY")}${sep}
            ${this.tool("time", "Time Slider")}${sep}${this.tool("viewer", "Viewer Window")}
          </map-toolbar>
          <map-toolbar>
            <button class="geo">Georeferencing ${this.caret()}</button>${sep}
            <span class="combo raster"><select aria-label="Raster layer"><option>VRF_MAGNA50_716.jpg</option></select>${this.caret()}</span>
            ${this.tool("ctrl", "Add Control Points", true)}${this.tool("wand", "Auto Registration")}${this.tool("ctrlsel", "Select Link")}${this.tool("ctrlzoom", "Zoom To Link")}${this.tool("ctrldel", "Delete Link")}${this.tool("geoview", "Viewer")}${this.tool("linktable", "View Link Table")}${this.tool("rotate", "Rotate")}${this.drop("Rotate options", "#a5a5a5")}
            <input class="field" type="text" aria-label="Rotation" />
          </map-toolbar>
        </div>
      </div>
      <main class="main">
        <section class="panel">
          ${this.head("Table Of Contents")}
          <div class="tabs">${this.tool("order", "List By Drawing Order", true)}${this.tool("source", "List By Source")}${this.tool("visibility", "List By Visibility")}${this.tool("selection", "List By Selection")}${sep}${this.tool("options", "Options")}</div>
          <div class="box">
            <ul class="tree">
              <li class="i0">${this.exp(true)}${icon("layers")}<span class="strong">Layers</span></li>
              <li class="i1">${this.exp(true)}<input class="tick" id="l1" type="checkbox" checked /><label class="name picked" for="l1">MTN50_ETRS89_Peninsula_Baleares_Canarias</label></li>
              <li class="i2"><span class="swatch s-mint"></span>&lt;all other values&gt;</li>
              <li class="i3">MTN50_CLAS</li>
              <li class="i2"><span class="swatch s-purple"></span>0716</li>
              <li class="i2"><span class="swatch s-forest"></span>0604</li>
              <li class="i1">${this.exp(true)}<input class="tick" id="l2" type="checkbox" checked /><label class="name" for="l2">VRF_MAGNA50_716.jpg</label></li>
              <li class="i3">RGB</li>
              <li class="i2"><span class="swatch s-red"></span><span class="band">Red:</span>Band_1</li>
              <li class="i2"><span class="swatch s-green"></span><span class="band">Green:</span>Band_2</li>
              <li class="i2"><span class="swatch s-blue"></span><span class="band">Blue:</span>Band_3</li>
            </ul>
            <scroll-bar class="hbar" start="1" size="74" ridged></scroll-bar>
          </div>
        </section>
        <section class="mapframe">
          <div class="map">
            <div class="sheet purple">0716</div>
            <div class="sheet east">0717</div>
            <div class="sheet south">0741</div>
            <div class="sheet east south">0742
              <svg class="marker" viewBox="0 0 28 28">
                <path d="M1 13.500h25M13.500 1v25" stroke="#ff3333"/>
                <path d="M21.500 5.500v16h-16V13.500M13.500 5.500h8" stroke="#420a30"/>
                <path d="M5.500 13.500v-8h8" stroke="#33f033"/>
                <path d="M12 13.500h3M13.500 12v3" stroke="#2222ff"/>
              </svg>
              <span class="linkno">2</span>
              <span class="snap">MTN50_ETRS89_Peninsula_Baleares_Canarias: Vertex</span>
            </div>
          </div>
          <scroll-bar axis="y" start="29" size="3"></scroll-bar>
          <div class="mapbar">
            <button class="on" aria-label="Data View">${icon("dataview")}</button><button aria-label="Layout View">${icon("layoutview")}</button><span class="rule"></span>
            <button aria-label="Refresh">${icon("refresh")}</button><button aria-label="Pause Drawing">${icon("pause")}</button>
            <scroll-bar start="68" size="2"></scroll-bar>
          </div>
        </section>
        <section class="panel">
          ${this.head("ArcToolbox")}
          <div class="box">
            <ul class="tree toolboxes">
              <li class="root">${icon("rootbox")}ArcToolbox</li>
              ${TOOLBOXES.map((t) => html`<li>${this.exp(false)}${icon(SCRIPTED.has(t) ? "scripttoolbox" : "toolbox")}<span>${t}</span></li>`)}
            </ul>
            <scroll-bar class="hbar" start="1" size="88" ridged></scroll-bar>
          </div>
        </section>
      </main>
      <footer class="status"><span></span></footer>
      <div class="taskbar"><span></span><span></span><span class="later"></span><span></span><span></span><span></span><span></span></div>
    `;
  }
}
